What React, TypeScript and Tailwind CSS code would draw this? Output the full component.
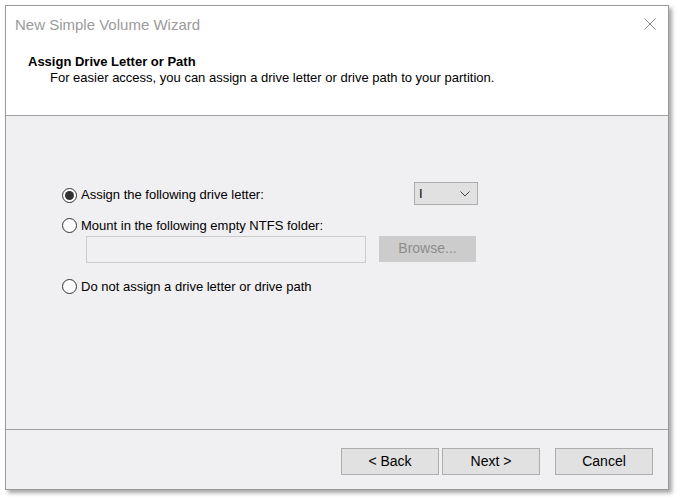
import React from 'react'

function Radio({ checked, label }: { checked?: boolean; label: string }) {
  return (
    <label className="flex items-center text-[13px] text-black">
      <span className="flex h-[15px] w-[15px] items-center justify-center rounded-full border border-[#333] bg-white">
        {checked && <span className="h-[9px] w-[9px] rounded-full bg-[#333]"></span>}
      </span>
      <span className="ml-[4px]">{label}</span>
    </label>
  )
}

function Button({ children, className = '' }: { children: React.ReactNode; className?: string }) {
  return (
    <button
      className={`flex h-[27px] w-[98px] items-center justify-center border border-[#adadad] bg-[#e1e1e1] text-[14px] text-black ${className}`}
    >
      {children}
    </button>
  )
}

export default function App() {
  return (
    <div
      className="h-[497px] w-[678px] bg-white pl-[5px] pt-[5px]"
      style={{ fontFamily: '"Liberation Sans", Arial, sans-serif' }}
    >
      <div className="flex h-[485px] w-[664px] flex-col border border-[#9a9a9a] bg-[#f0eff2] shadow-[3px_3px_4px_rgba(0,0,0,0.35)]">
        {/* title + header */}
        <div className="h-[110px] border-b border-[#a0a0a0] bg-white">
          <div className="flex h-[38px] items-center justify-between pl-[9px] pr-[12px]">
            <span className="text-[15px] text-[#9b9b9b]">New Simple Volume Wizard</span>
            <svg width="12" height="12" viewBox="0 0 12 12" className="mb-[2px]">
              <path d="M0.5 0.5 L11.5 11.5 M11.5 0.5 L0.5 11.5" stroke="#8a8a8a" strokeWidth="1" fill="none" />
            </svg>
          </div>
          <div className="pl-[22px] pt-[10px]">
            <div className="text-[13px] font-bold leading-[16px] text-black">Assign Drive Letter or Path</div>
            <div className="pl-[22px] text-[13px] leading-[16px] text-black">
              For easier access, you can assign a drive letter or drive path to your partition.
            </div>
          </div>
        </div>

        {/* body */}
        <div className="flex-1 pl-[56px] pt-[68px]">
          <div className="flex h-[22px] w-[416px] items-center justify-between">
            <Radio checked label="Assign the following drive letter:" />
            <div className="-mt-[3px] flex h-[23px] w-[64px] items-center justify-between border border-[#adadad] bg-[#e1e1e1] pl-[4px] pr-[7px]">
              <span className="text-[13px] text-black">I</span>
              <svg width="10" height="6" viewBox="0 0 10 6">
                <path d="M0.5 0.5 L5 5 L9.5 0.5" stroke="#444" strokeWidth="1" fill="none" />
              </svg>
            </div>
          </div>
          <div className="mt-[10px]">
            <Radio label="Mount in the following empty NTFS folder:" />
          </div>
          <div className="ml-[24px] flex gap-[13px]">
            <div className="h-[27px] w-[280px] border border-[#cccccc] bg-[#f0eff2]"></div>
            <div className="flex h-[26px] w-[97px] items-center justify-center border border-[#cccccc] bg-[#cccccc] text-[14px] text-[#8c8c8c]">
              Browse...
            </div>
          </div>
          <div className="mt-[14px]">
            <Radio label="Do not assign a drive letter or drive path" />
          </div>
        </div>

        {/* footer */}
        <div className="h-[60px] border-t border-[#a0a0a0] pl-[335px] pt-[18px]">
          <div className="flex">
            <Button>&lt; Back</Button>
            <Button className="ml-[3px]">Next &gt;</Button>
            <Button className="ml-[15px]">Cancel</Button>
          </div>
        </div>
      </div>
    </div>
  )
}
